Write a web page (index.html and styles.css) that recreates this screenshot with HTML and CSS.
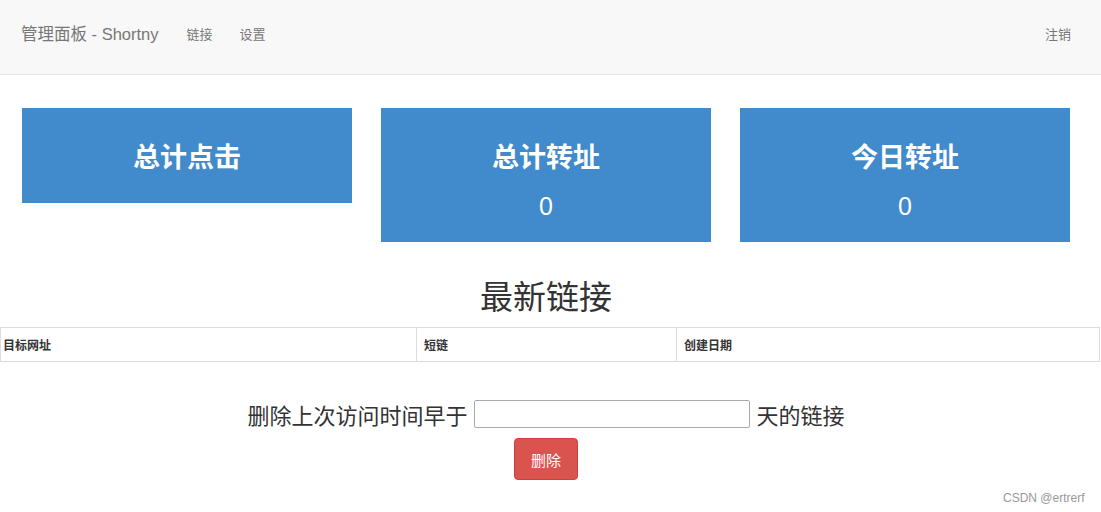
FILE: index.html
```html
<!DOCTYPE html>
<html lang="zh">
<head>
<meta charset="utf-8">
<title>管理面板 - Shortny</title>
<link rel="stylesheet" href="styles.css">
</head>
<body>
<nav class="navbar">
  <div class="nav-inner">
    <span class="brand">管理面板 - Shortny</span>
    <a class="nav-link" href="#">链接</a>
    <a class="nav-link" href="#">设置</a>
    <a class="nav-link nav-right" href="#">注销</a>
  </div>
</nav>
<main class="main">
  <section class="cards">
    <div class="card">
      <h3 class="card-title">总计点击</h3>
    </div>
    <div class="card">
      <h3 class="card-title">总计转址</h3>
      <p class="card-num">0</p>
    </div>
    <div class="card">
      <h3 class="card-title">今日转址</h3>
      <p class="card-num">0</p>
    </div>
  </section>
  <h2 class="section-title">最新链接</h2>
  <table class="links">
    <thead>
      <tr>
        <th class="col-a">目标网址</th>
        <th class="col-b">短链</th>
        <th class="col-c">创建日期</th>
      </tr>
    </thead>
  </table>
  <form class="purge">
    <div class="purge-row">
      <span>删除上次访问时间早于</span>
      <input class="purge-input" type="text">
      <span>天的链接</span>
    </div>
    <button class="btn-danger" type="button">删除</button>
  </form>
</main>
<div class="watermark">CSDN @ertrerf</div>
</body>
</html>
```
FILE: styles.css
```css
html, body {
  margin: 0;
  padding: 0;
  background: #fff;
  font-family: "Liberation Sans", "Noto Sans CJK SC", sans-serif;
  color: #333;
}
.navbar {
  background: #f8f8f8;
  border-bottom: 1px solid #e7e7e7;
  height: 74px;
}
.nav-inner {
  width: 1092px;
  box-sizing: border-box;
  padding: 0 21px 8px;
  height: 100%;
  display: flex;
  align-items: center;
}
.brand {
  font-size: 16.5px;
  color: #777;
  margin-right: 28px;
}
.nav-link {
  font-size: 13px;
  color: #777;
  text-decoration: none;
  margin-right: 27px;
}
.nav-right {
  margin-left: auto;
  margin-right: 0;
}
.main {
  width: 1100px;
}
.cards {
  width: 1092px;
  box-sizing: border-box;
  padding: 0 22px;
  margin-top: 33px;
  display: flex;
  align-items: flex-start;
  gap: 29px;
}
.card {
  width: 330px;
  background: #418acb;
  color: #fff;
  text-align: center;
  padding: 32px 0 21px;
  box-sizing: border-box;
  display: flex;
  flex-direction: column;
}
.card-title {
  margin: 0 0 6px;
  font-size: 27px;
  line-height: 36px;
  font-weight: 700;
}
.card-num {
  margin: 9px 0 0;
  font-size: 25px;
  line-height: 30px;
}
.section-title {
  width: 1092px;
  text-align: center;
  font-size: 33px;
  font-weight: 400;
  line-height: 40px;
  margin: 36px 0 9px;
  color: #333;
}
.links {
  width: 1100px;
  border-collapse: collapse;
  table-layout: fixed;
}
.links th {
  box-sizing: border-box;
  border: 1px solid #ddd;
  font-size: 12px;
  font-weight: 700;
  text-align: left;
  padding: 0 7px;
  height: 34px;
  color: #333;
}
.links .col-a { width: 416px; padding-left: 2px; }
.links .col-b { width: 260px; }
.purge {
  width: 1092px;
  display: flex;
  flex-direction: column;
  align-items: center;
  margin-top: 38px;
}
.purge-row {
  display: flex;
  align-items: center;
  font-size: 22px;
  color: #333;
  height: 28px;
}
.purge-input {
  width: 276px;
  height: 28px;
  box-sizing: border-box;
  margin: 0 7px 0 6px;
  border: 1px solid #aaa;
  border-radius: 2px;
}
.btn-danger {
  margin-top: 10px;
  width: 64px;
  height: 42px;
  background: #d9534f;
  border: 1px solid #d43f3a;
  border-radius: 4px;
  color: #fff;
  font-size: 15px;
  font-family: "Liberation Sans", "Noto Sans CJK SC", sans-serif;
}
.watermark {
  position: absolute;
  left: 1003px;
  top: 491px;
  font-size: 12px;
  color: #999;
}
```
